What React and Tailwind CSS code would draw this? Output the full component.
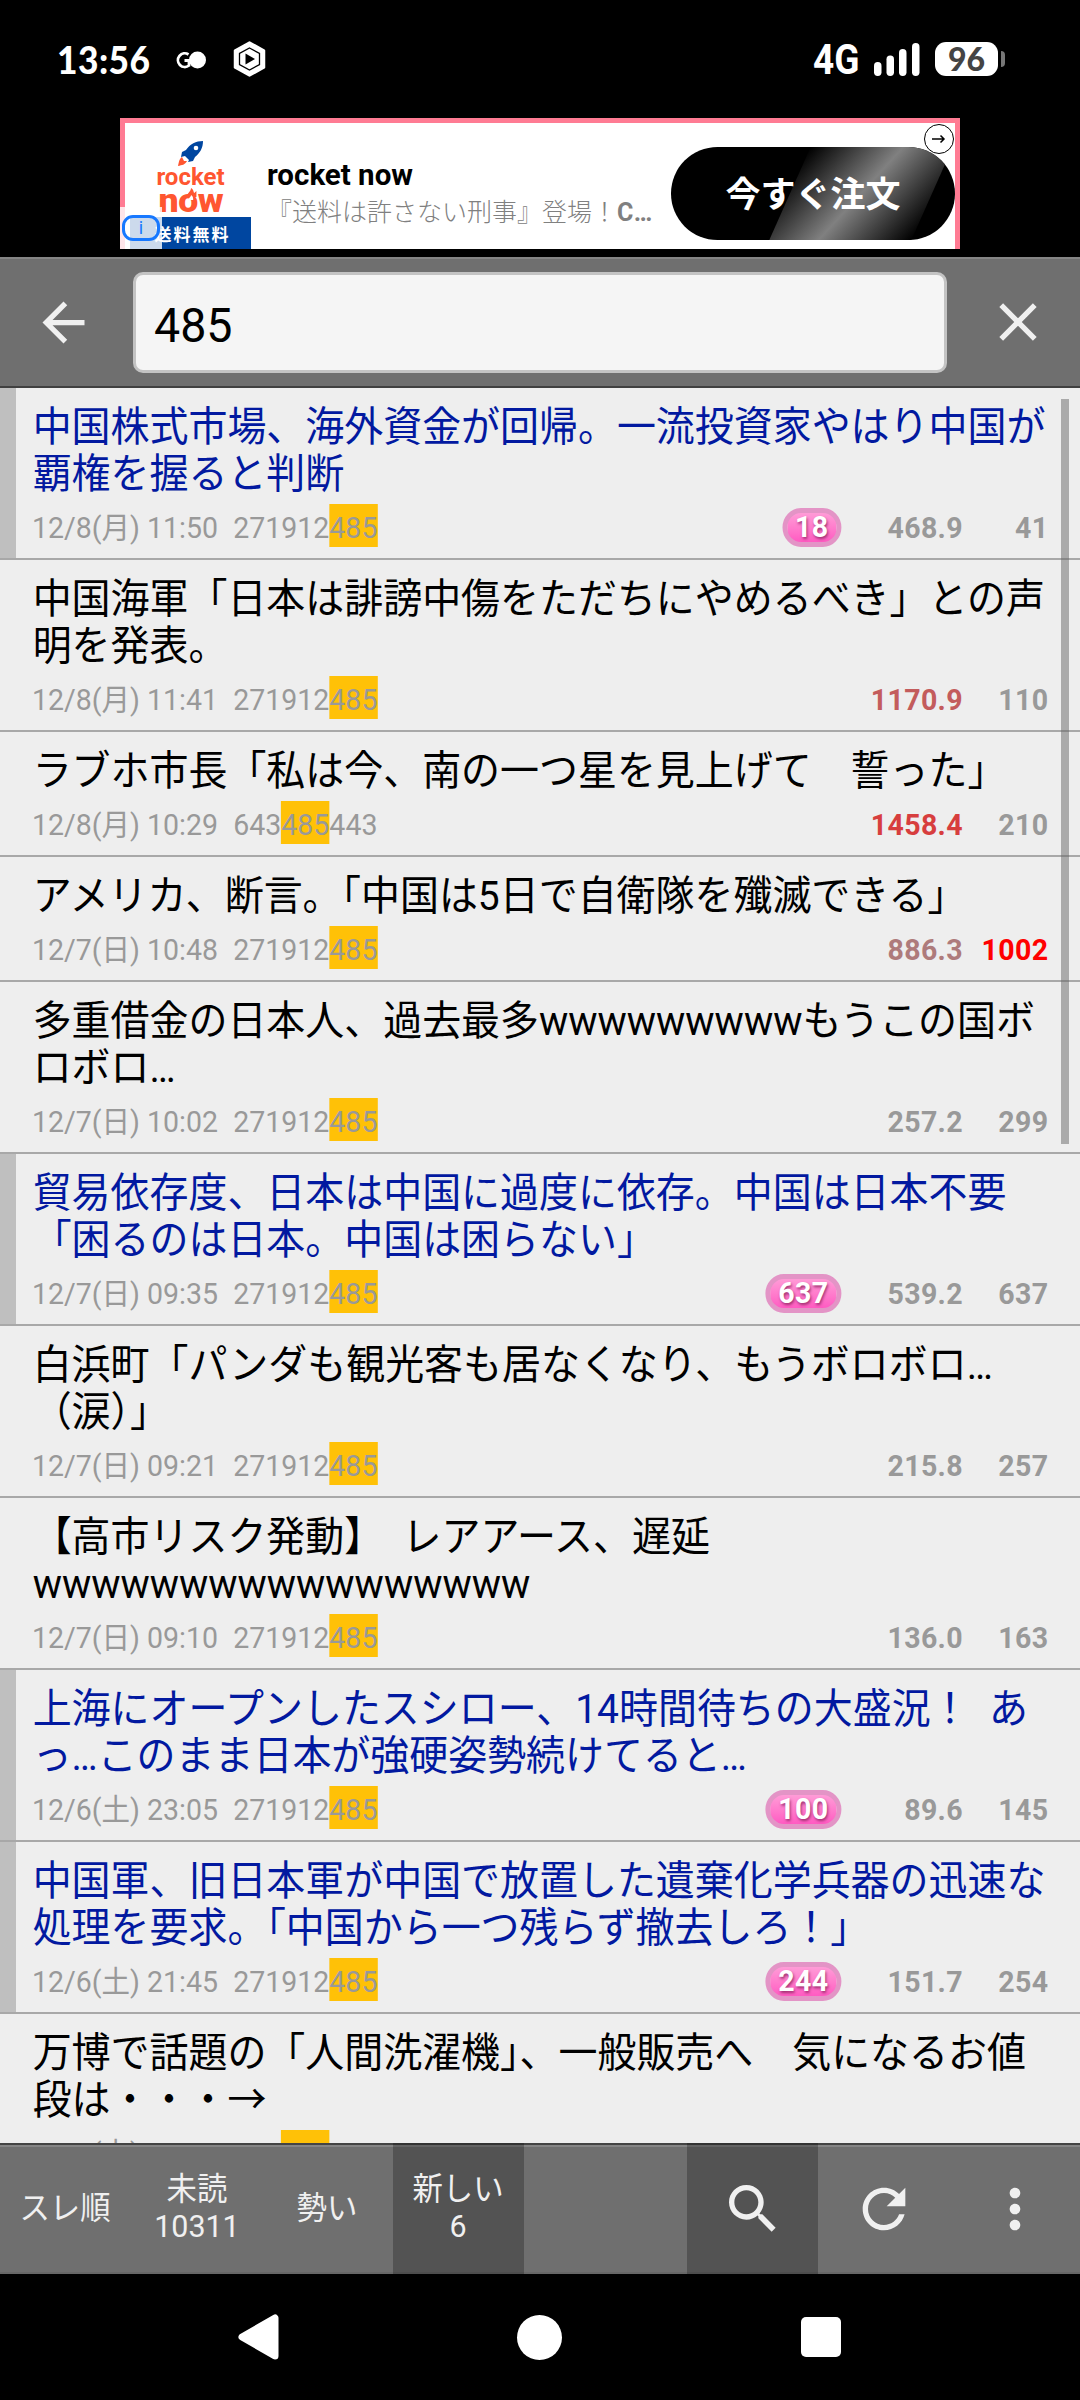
import { clsx } from 'clsx'

const QUERY = '485'

const threads = [
  { title: '中国株式市場、海外資金が回帰。一流投資家やはり中国が覇権を握ると判断', date: '12/8(月) 11:50', id: '271912485', unread: 18, speed: '468.9', count: 41, read: true },
  { title: '中国海軍「日本は誹謗中傷をただちにやめるべき」との声明を発表。', date: '12/8(月) 11:41', id: '271912485', speed: '1170.9', speedColor: 'text-[#c35c5c]', count: 110 },
  { title: 'ラブホ市長「私は今、南の一つ星を見上げて　誓った」', date: '12/8(月) 10:29', id: '643485443', speed: '1458.4', speedColor: 'text-[#d73e3e]', count: 210 },
  { title: 'アメリカ、断言。「中国は5日で自衛隊を殲滅できる」', date: '12/7(日) 10:48', id: '271912485', speed: '886.3', speedColor: 'text-[#ae7b7b]', count: 1002, full: true },
  { title: '多重借金の日本人、過去最多wwwwwwwwwもうこの国ボロボロ…', date: '12/7(日) 10:02', id: '271912485', speed: '257.2', count: 299 },
  { title: '貿易依存度、日本は中国に過度に依存。中国は日本不要「困るのは日本。中国は困らない」', date: '12/7(日) 09:35', id: '271912485', unread: 637, speed: '539.2', count: 637, read: true },
  { title: '白浜町「パンダも観光客も居なくなり、もうボロボロ…（涙）」', date: '12/7(日) 09:21', id: '271912485', speed: '215.8', count: 257 },
  { title: '【高市リスク発動】  レアアース、遅延\nwwwwwwwwwwwwwwwww', date: '12/7(日) 09:10', id: '271912485', speed: '136.0', count: 163 },
  { title: '上海にオープンしたスシロー、14時間待ちの大盛況！  あっ…このまま日本が強硬姿勢続けてると…', date: '12/6(土) 23:05', id: '271912485', unread: 100, speed: '89.6', count: 145, read: true },
  { title: '中国軍、旧日本軍が中国で放置した遺棄化学兵器の迅速な処理を要求。「中国から一つ残らず撤去しろ！」', date: '12/6(土) 21:45', id: '271912485', unread: 244, speed: '151.7', count: 254, read: true },
  { title: '万博で話題の「人間洗濯機」、一般販売へ　気になるお値段は・・・→', date: '12/6(土) 17:41', id: '143485443', speed: '356.7', count: 571 },
]

function StatusBar() {
  return (
    <div className="flex h-[118px] shrink-0 items-center pl-[57px] pr-[75px] font-['Lato','Noto_Sans_CJK_JP',sans-serif] text-white">
      <span className="w-[95px] origin-left scale-x-[0.93] text-[38px] leading-none font-black tracking-[0.5px]">13:56</span>
      <svg className="mt-[2px] ml-[24px] h-[20px] w-[32px]" viewBox="0 0 32 20">
        <path d="M12.500 4.500A6.800 6.800 0 1 0 13 15.500V10.500H8.500" fill="none" stroke="#fff" strokeWidth="2.800" />
        <circle cx="21.500" cy="10" r="8.500" fill="#fff" />
      </svg>
      <svg className="ml-[25px] h-[36px] w-[33px]" viewBox="0 0 33 36">
        <path d="M16.500 1.500L31 9.500V26.500L16.500 34.500L2 26.500V9.500Z" fill="#fff" stroke="#fff" strokeWidth="2.500" strokeLinejoin="round" />
        <path d="M16.500 7L26.500 12.500V23.500L16.500 29L6.500 23.500V12.500Z" fill="none" stroke="#000" strokeWidth="1.300" />
        <path d="M12.500 12.500V23.500L22 18Z" fill="#000" />
      </svg>
      <span className="mr-px ml-auto w-[46px] origin-left scale-x-[0.86] font-['Roboto'] text-[43px] leading-none font-bold">4G</span>
      <svg className="mt-[1px] ml-[14px] h-[33px] w-[46px]" viewBox="0 0 46 33" fill="#fff">
        <rect x="0" y="19" width="7.500" height="14" rx="3.700" />
        <rect x="12.500" y="12.500" width="7.500" height="20.500" rx="3.700" />
        <rect x="25" y="6" width="7.500" height="27" rx="3.700" />
        <rect x="38" y="0" width="7.500" height="33" rx="3.700" />
      </svg>
      <span className="ml-[15px] flex h-[34px] w-[63px] items-center justify-center rounded-[11px] bg-white text-[32px] leading-none font-black text-[#444]">96</span>
      <span className="ml-[3px] h-[16px] w-[4px] rounded-r-[4px] bg-[#777]" />
    </div>
  )
}

function RocketLogo() {
  return (
    <div className="ml-[5px] flex h-[126px] w-[121px] flex-col items-center">
      <svg className="mt-[18px] h-[25px] w-[26px]" viewBox="0 0 26 25">
        <path d="M25 0C18 0 12 3 8 9L4 11L3 16L7 15L11 19L10 21L15 20L17 16C22 12 25 7 25 0Z" fill="#0046a0" />
        <circle cx="18" cy="7" r="2.300" fill="#fff" />
        <path d="M4 16C1 18 1 21 0 25C4 24 7 24 9 20L6 20Z" fill="#ff5630" />
      </svg>
      <div className="h-[22px] text-[24px] leading-[22px] font-bold text-[#ff5630]">rocket</div>
      <div className="relative h-[29px] scale-x-[1.08] text-[33px] leading-[25px] font-black tracking-[-0.5px] text-[#ff5630]">
        now
        {/* flame on top of the o */}
        <svg className="absolute top-0 left-[24px] h-[12px] w-[12px]" viewBox="0 0 12 12">
          <path d="M2 9C2 5 6 4 6 0C9 2 8 4 9 5L11 3V9Z" fill="#ff5630" />
          <path d="M4 12C4 9 6 9 6 7C8 8 8 10 8 12Z" fill="#fff" />
        </svg>
      </div>
      <div className="flex h-[32px] w-full items-center justify-center bg-[#0046a0] pt-[5px] pl-[4px] text-[17px] leading-none font-bold tracking-[2px] text-white">送料無料</div>
    </div>
  )
}

function AdBanner() {
  return (
    <div className="flex h-[139px] shrink-0 justify-center bg-black">
      <div className="relative flex h-[131px] w-[840px] border-x-[5px] border-t-[5px] border-[#ff7b93] bg-white">
        <RocketLogo />
        <div className="ml-[16px] flex w-[400px] flex-col pt-[35px]">
          <div className="text-[29.500px] leading-[35px] font-bold">rocket now</div>
          <div className="mt-[3px] w-[400px] text-[25px] leading-[34px] whitespace-nowrap text-[#808080]">
            <span className="font-light">『送料は許さない刑事』登場！</span><span className="font-bold tracking-[0.5px]">C…</span>
          </div>
        </div>
        <div className="relative mt-[24px] ml-auto flex h-[93px] w-[284px] items-center justify-center overflow-hidden rounded-full bg-black">
          <div className="absolute left-[119px] h-full w-[142px] -skew-x-[24deg] bg-[linear-gradient(115deg,#000,#808080_50%,#000)]" />
          <span className="relative pt-[5px] text-[35px] font-bold text-white">今すぐ注文</span>
        </div>
        <svg className="absolute top-0 right-0 h-[32px] w-[32px]" viewBox="0 0 32 32">
          <circle cx="16" cy="16" r="14.500" fill="#fff" stroke="#000" />
          <path d="M9 16H21M17.500 12.500L21 16L17.500 19.500" fill="none" stroke="#000" strokeWidth="1.500" />
        </svg>
        <div className="absolute bottom-0 -left-[5px] flex h-[42px] w-[42px] items-center justify-center bg-white/80">
          <div className="flex h-[26px] w-[38px] items-center justify-center rounded-[11px] border-[3px] border-[#1778ff] text-[18px] leading-none text-[#1778ff]">i</div>
        </div>
      </div>
    </div>
  )
}

function SearchHeader() {
  return (
    <div className="flex h-[131px] shrink-0 items-center border-t-2 border-b-2 border-t-[#858585] border-b-[#404040] bg-[#6f6f6f] pb-[1px]">
      <svg className="ml-[32px] h-[63px] w-[63px]" viewBox="0 0 24 24" fill="#f0f0f0">
        <path d="M20 11H7.830l5.590-5.590L12 4l-8 8 8 8 1.410-1.410L7.830 13H20v-2z" />
      </svg>
      <div className="ml-[38px] flex h-[101px] w-[814px] items-center rounded-[10px] border-[3px] border-[#c3c3c3] bg-[#f5f5f5] pt-[10px] pl-[18px] text-[47.500px] leading-none">
        <span className="origin-left scale-x-[0.98]">{QUERY}</span>
      </div>
      <svg className="ml-[39px] h-[64px] w-[64px]" viewBox="0 0 24 24" fill="#f0f0f0">
        <path d="M19 6.410L17.590 5 12 10.590 6.410 5 5 6.410 10.590 12 5 17.590 6.410 19 12 13.410 17.590 19 19 17.590 13.410 12z" />
      </svg>
    </div>
  )
}

function ThreadId({ id }) {
  const at = id.indexOf(QUERY)
  return (
    <span className="ml-[16px] flex">
      {id.slice(0, at)}
      <mark className="h-[43px] bg-[#ffc107] text-inherit">{QUERY}</mark>
      {id.slice(at + QUERY.length)}
    </span>
  )
}

// Text is condensed to 95%, so the inner column is wider than the row
function ThreadRow({ thread }) {
  return (
    <li className={clsx('shrink-0 border-b-2 border-[#a8a8a8] pt-[16px] pb-[11px]', thread.read ? 'bg-[linear-gradient(to_right,#bfbfbf_16px,#eee_16px)]' : 'bg-[#eee]')}>
      <div className="ml-[32px] w-[1070px] origin-left scale-x-95">
        <p className={clsx('pl-[0.7px] text-[41px] leading-[47px] break-all whitespace-pre-wrap', thread.read ? 'text-[#0219a0]' : 'text-black')}>{thread.title}</p>
        <div className="mt-[6px] flex h-[43px] text-[30px] leading-[47px] text-[#999]">
          <span>{thread.date}</span>
          <ThreadId id={thread.id} />
          <div className="ml-auto flex items-center pt-[3px] font-bold tracking-[0.4px]">
            {thread.unread && (
              <span className="flex h-[39px] items-center rounded-full border-[5px] border-[#e394c6] bg-linear-to-b from-[#ff9bd7] to-[#ff5ac2] px-[8.500px] leading-none text-white [text-shadow:1px_2px_3px_#a03070]">{thread.unread}</span>
            )}
            <span className={clsx('w-[128px] text-right', thread.speedColor)}>{thread.speed}</span>
            <span className={clsx('w-[90px] text-right', thread.full && 'text-[#f00]')}>{thread.count}</span>
          </div>
        </div>
      </div>
    </li>
  )
}

function Tab({ label, count, active }) {
  return (
    <div className={clsx('flex h-full w-[131px] items-center justify-center pb-[1px] text-center text-[32px] leading-[37px]', active && 'bg-black/25')}>
      <div className="scale-x-95 whitespace-nowrap">
        <div>{label}</div>
        {count && <div>{count}</div>}
      </div>
    </div>
  )
}

function IconButton({ d, active }) {
  return (
    <div className={clsx('flex h-full w-[131px] items-center justify-center', active && 'bg-black/25')}>
      <svg className="h-[64px] w-[64px]" viewBox="0 0 24 24" fill="#f0f0f0"><path d={d} /></svg>
    </div>
  )
}

function BottomBar() {
  return (
    <div className="flex h-[131px] shrink-0 bg-[linear-gradient(#444_2px,#858585_2px,#858585_4px,#6f6f6f_4px,#6f6f6f_129px,#676767_129px)] text-[#f0f0f0]">
      <Tab label="スレ順" />
      <Tab label="未読" count="10311" />
      <Tab label="勢い" />
      <Tab label="新しい" count="6" active />
      <div className="ml-auto flex">
        <IconButton active d="M15.500 14h-.790l-.280-.270C15.410 12.590 16 11.110 16 9.500 16 5.910 13.090 3 9.500 3S3 5.910 3 9.500 5.910 16 9.500 16c1.610 0 3.090-.590 4.230-1.570l.270.280v.790l5 4.990L20.490 19l-4.990-5zm-6 0C7.010 14 5 11.990 5 9.500S7.010 5 9.500 5 14 7.010 14 9.500 11.990 14 9.500 14z" />
        <IconButton d="M17.650 6.350C16.200 4.900 14.210 4 12 4c-4.420 0-7.990 3.580-7.990 8s3.570 8 7.990 8c3.730 0 6.840-2.550 7.730-6h-2.080c-.820 2.330-3.040 4-5.650 4-3.310 0-6-2.690-6-6s2.690-6 6-6c1.660 0 3.140.690 4.220 1.780L13 11h7V4l-2.350 2.350z" />
        <IconButton d="M12 8c1.100 0 2-.900 2-2s-.900-2-2-2-2 .900-2 2 .900 2 2 2zm0 2c-1.100 0-2 .900-2 2s.900 2 2 2 2-.900 2-2-.900-2-2-2zm0 6c-1.100 0-2 .900-2 2s.900 2 2 2 2-.900 2-2-.900-2-2-2z" />
      </div>
    </div>
  )
}

function NavBar() {
  return (
    <div className="flex h-[126px] items-center bg-black">
      <svg className="ml-[238px] h-[46px] w-[41px]" viewBox="0 0 41 46">
        <path d="M4 23L37 4V42Z" fill="#fff" stroke="#fff" strokeWidth="7" strokeLinejoin="round" />
      </svg>
      <div className="ml-[238px] h-[45px] w-[45px] rounded-full bg-white" />
      <div className="ml-[239px] h-[40px] w-[40px] rounded-[5px] bg-white" />
    </div>
  )
}

export default function App() {
  return (
    <div lang="ja" className="flex h-[2400px] w-[1080px] flex-col overflow-hidden bg-black font-['Roboto','Noto_Sans_CJK_JP',sans-serif]">
      <StatusBar />
      <AdBanner />
      <SearchHeader />
      <div className="relative h-[1755px] shrink-0 overflow-hidden bg-[#eee]">
        <ul className="flex flex-col">
          {threads.map(t => <ThreadRow key={t.title} thread={t} />)}
        </ul>
        <div className="absolute top-[11px] right-[11px] h-[745px] w-[8px] bg-[#666]/50" />
      </div>
      <BottomBar />
      <NavBar />
    </div>
  )
}
